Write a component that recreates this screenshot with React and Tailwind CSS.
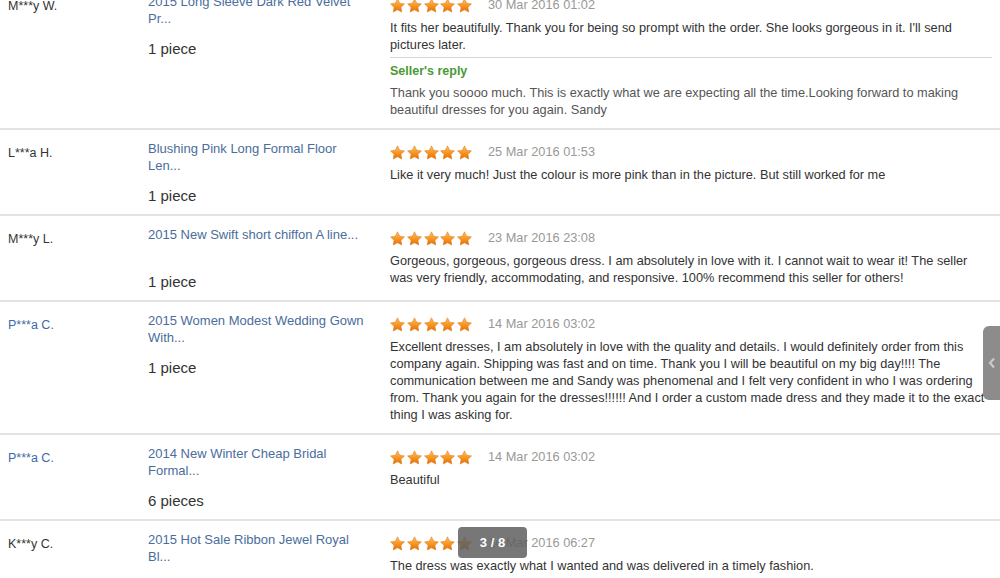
import React from "react";

const reviews = [
  {
    name: "M***y W.",
    nameLink: false,
    title: ["2015 Long Sleeve Dark Red Velvet", "Pr..."],
    qty: "1 piece",
    date: "30 Mar 2016 01:02",
    text: [
      "It fits her beautifully. Thank you for being so prompt with the order. She looks gorgeous in it. I'll send",
      "pictures later.",
    ],
    reply: [
      "Thank you soooo much. This is exactly what we are expecting all the time.Looking forward to making",
      "beautiful dresses for you again. Sandy",
    ],
  },
  {
    name: "L***a H.",
    nameLink: false,
    title: ["Blushing Pink Long Formal Floor", "Len..."],
    qty: "1 piece",
    date: "25 Mar 2016 01:53",
    text: ["Like it very much! Just the colour is more pink than in the picture. But still worked for me"],
  },
  {
    name: "M***y L.",
    nameLink: false,
    title: ["2015 New Swift short chiffon A line..."],
    qty: "1 piece",
    date: "23 Mar 2016 23:08",
    text: [
      "Gorgeous, gorgeous, gorgeous dress. I am absolutely in love with it. I cannot wait to wear it! The seller",
      "was very friendly, accommodating, and responsive. 100% recommend this seller for others!",
    ],
  },
  {
    name: "P***a C.",
    nameLink: true,
    title: ["2015 Women Modest Wedding Gown", "With..."],
    qty: "1 piece",
    date: "14 Mar 2016 03:02",
    text: [
      "Excellent dresses, I am absolutely in love with the quality and details. I would definitely order from this",
      "company again. Shipping was fast and on time. Thank you I will be beautiful on my big day!!!! The",
      "communication between me and Sandy was phenomenal and I felt very confident in who I was ordering",
      "from. Thank you again for the dresses!!!!!! And I order a custom made dress and they made it to the exact",
      "thing I was asking for.",
    ],
  },
  {
    name: "P***a C.",
    nameLink: true,
    title: ["2014 New Winter Cheap Bridal", "Formal..."],
    qty: "6 pieces",
    date: "14 Mar 2016 03:02",
    text: ["Beautiful"],
  },
  {
    name: "K***y C.",
    nameLink: false,
    title: ["2015 Hot Sale Ribbon Jewel Royal", "Bl..."],
    qty: "1 piece",
    date: "14 Mar 2016 06:27",
    text: ["The dress was exactly what I wanted and was delivered in a timely fashion."],
  },
];

const Star = ({ id }) => (
  <svg width="15" height="15" viewBox="0 0 24 23" className="shrink-0">
    <defs>
      <linearGradient id={id} x1="0" y1="0" x2="0" y2="1">
        <stop offset="0" stopColor="#ffc266" />
        <stop offset="0.55" stopColor="#f7931e" />
        <stop offset="1" stopColor="#e0700a" />
      </linearGradient>
    </defs>
    <path
      d="M12 0.8l3.4 7 7.7 1.1-5.6 5.4 1.3 7.6L12 18.3l-6.8 3.6 1.3-7.6L0.9 8.9l7.7-1.1z"
      fill={`url(#${id})`}
      stroke="#d9730f"
      strokeWidth="0.8"
    />
  </svg>
);

const Stars = ({ row }) => (
  <div className="flex gap-[1.75px]">
    {[0, 1, 2, 3, 4].map((i) => (
      <Star key={i} id={`st-${row}-${i}`} />
    ))}
  </div>
);

const App = () => {
  return (
    <div className="relative w-[1000px] h-[578px] overflow-hidden bg-white font-['Liberation_Sans',Arial,sans-serif]">
      <div className="-mt-[17px]">
        {reviews.map((r, idx) => (
          <div key={idx} className="flex border-b-2 border-[#e3e3e3]">
            {/* buyer */}
            <div
              className={`w-[148px] shrink-0 pl-2 pt-[15px] text-[12.5px] leading-4 ${
                r.nameLink ? "text-[#3d6aa8]" : "text-[#333]"
              }`}
            >
              {r.name}
            </div>
            {/* product */}
            <div className="w-[242px] shrink-0 pt-[11px] pb-[9px]">
              <div className="h-[34px] text-[13px] leading-[16.5px] text-[#4a6d9c]">
                {r.title.map((t, i) => (
                  <div key={i} className="whitespace-nowrap">{t}</div>
                ))}
              </div>
              <div className="mt-[12px] text-[15px] leading-[18px] text-[#333]">{r.qty}</div>
            </div>
            {/* feedback */}
            <div className="w-[602px] shrink-0 pt-[14px] pb-[10px]">
              <div className="flex items-center gap-4 h-4">
                <Stars row={idx} />
                <span className="text-[12.75px] text-[#999]">{r.date}</span>
              </div>
              <div className="mt-[6px] text-[12.75px] leading-[17px] text-[#333]">
                {r.text.map((t, i) => (
                  <div key={i} className="whitespace-nowrap">{t}</div>
                ))}
              </div>
              {r.reply && (
                <div className="mt-[4px] border-t border-[#d6d6d6] pt-[5px]">
                  <div className="text-[12.5px] leading-[17px] font-bold text-[#4a9a35]">Seller's reply</div>
                  <div className="mt-[4px] text-[12.75px] leading-[17px] text-[#555]">
                    {r.reply.map((t, i) => (
                      <div key={i} className="whitespace-nowrap">{t}</div>
                    ))}
                  </div>
                </div>
              )}
            </div>
          </div>
        ))}
      </div>

      {/* side tab */}
      <div className="absolute right-0 top-[326px] w-[17px] h-[74px] rounded-l-[6px] bg-[#8c8c8c] flex items-center justify-center">
        <svg width="8" height="12" viewBox="0 0 8 12">
          <path d="M6 1.5L2 6l4 4.5" fill="none" stroke="#c9c9c9" strokeWidth="2.2" />
        </svg>
      </div>

      {/* page counter */}
      <div className="absolute left-[458px] top-[527px] w-[69px] h-[31px] rounded-[4px] bg-[rgba(95,95,95,0.85)] flex items-center justify-center text-white text-[13px] font-bold">
        3 / 8
      </div>
    </div>
  );
};

export default App;
